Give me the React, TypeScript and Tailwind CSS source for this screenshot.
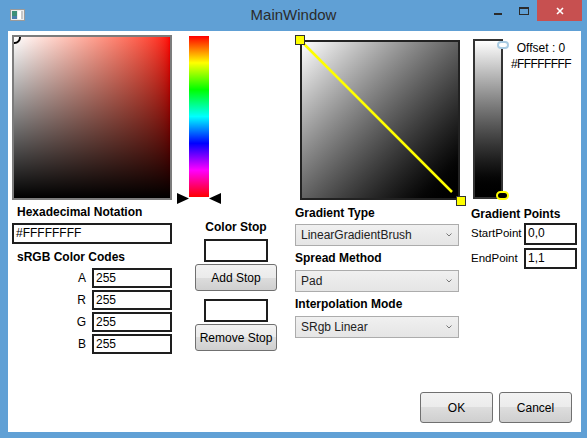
import React from "react";

const inputCls =
  "border-2 border-[#1e1e1e] bg-white px-[2px] text-[12px] leading-[16px] text-black";

const aeroBtn =
  "flex items-center justify-center rounded-[3px] border border-[#707070] bg-[linear-gradient(#f2f2f2_0%,#ebebeb_50%,#dddddd_50%,#cfcfcf_100%)] text-[12px] text-black";

function Combo({ value }: { value: string }) {
  return (
    <div className="flex h-[22px] w-[164px] items-center justify-between border border-[#acacac] bg-[linear-gradient(#f0f0f0,#e5e5e5)] pl-[5px] pr-[6px] text-[12px] text-[#222]">
      <span>{value}</span>
      <svg width="6" height="4" viewBox="0 0 6 4">
        <path d="M0.5 0.5 L3 3 L5.5 0.5" fill="none" stroke="#777" strokeWidth="1" />
      </svg>
    </div>
  );
}

function Label({ children, className = "" }: { children: React.ReactNode; className?: string }) {
  return <div className={`h-[16px] text-[12px] font-bold leading-[16px] text-black ${className}`}>{children}</div>;
}

function TitleBar() {
  return (
    <div className="grid h-[31px] grid-cols-[1fr_auto_1fr]">
      <div className="pl-[10px] pt-[9px]">
        {/* app icon */}
        <svg width="15" height="12" viewBox="0 0 15 12">
          <rect x="0.5" y="0.5" width="14" height="11" fill="#ececec" stroke="#9a9a9a" />
          <rect x="2" y="2" width="5" height="8" fill="#3d8f78" />
          <rect x="2" y="7" width="5" height="3" fill="#4a7fb0" />
          <rect x="8" y="2" width="3" height="8" fill="#ffffff" />
          <rect x="11" y="2" width="2" height="8" fill="#c8c8c8" />
        </svg>
      </div>
      <div className="pt-[5px] text-[15px] leading-[20px] text-[#2b2b2b]">MainWindow</div>
      <div className="flex items-start justify-end pr-[5px]">
        <div className="flex h-[21px] w-[26px] justify-center pt-[13px]">
          <div className="h-[2px] w-[8px] bg-[#2b2b2b]" />
        </div>
        <div className="flex h-[21px] w-[26px] justify-center pt-[7px]">
          <div className="h-[8px] w-[10px] border border-t-2 border-[#2b2b2b]" />
        </div>
        <div className="flex h-[21px] w-[45px] items-center justify-center bg-[#c75050]">
          <svg width="8" height="8" viewBox="0 0 8 8">
            <path d="M1 1 L7 7 M7 1 L1 7" stroke="#fff" strokeWidth="1.6" />
          </svg>
        </div>
      </div>
    </div>
  );
}

export default function App() {
  return (
    <div className="flex h-[438px] w-[587px] flex-col bg-[#60a0d5] font-['Liberation_Sans',Arial,sans-serif]">
      <TitleBar />

      <div className="mb-[6px] ml-[8px] mr-[6px] flex flex-1 flex-col bg-white">
        <div className="flex items-start">
          {/* Column 1: colour picker and codes */}
          <div className="ml-[4px] mt-[4px] flex w-[160px] flex-col">
            <div className="relative h-[165px] w-[160px] overflow-hidden border-2 border-[#7c7c7c] bg-linear-to-r from-white to-[#ff0000]">
              <div className="h-full w-full bg-linear-to-t from-black to-transparent" />
              <div className="absolute -left-[6px] -top-[6px] h-[13px] w-[13px] rounded-full border-2 border-black" />
            </div>
            <Label className="mt-[4px] pl-[5px]">Hexadecimal Notation</Label>
            <div className={`${inputCls} mt-[3px] h-[21px] w-[160px]`}>#FFFFFFFF</div>
            <Label className="mt-[5px] pl-[5px]">sRGB Color Codes</Label>
            <div className="mt-[3px] flex flex-col gap-[2px]">
              {["A", "R", "G", "B"].map((c) => (
                <div key={c} className="flex h-[20px] items-center">
                  <div className="w-[74px] text-right text-[12px] text-black">{c}</div>
                  <div className={`${inputCls} ml-[6px] h-[20px] w-[80px]`}>255</div>
                </div>
              ))}
            </div>
          </div>

          {/* Column 2: hue bar and colour stops */}
          <div className="flex w-[114px] flex-col">
            <div className="relative h-[172px]">
              <div className="ml-[17px] mt-[5px] h-[161px] w-[20px] bg-[linear-gradient(#ff0000,#ffff00,#00ff00,#00ffff,#0000ff,#ff00ff,#ff0000)]" />
              <svg className="absolute left-[5px] top-[162px]" width="12" height="11" viewBox="0 0 12 11">
                <polygon points="0,0 12,5.5 0,11" fill="#000" />
              </svg>
              <svg className="absolute left-[37px] top-[162px]" width="12" height="11" viewBox="0 0 12 11">
                <polygon points="12,0 0,5.5 12,11" fill="#000" />
              </svg>
            </div>
            <Label className="ml-[23px] mt-[16px] w-[82px] text-center">Color Stop</Label>
            <div className="ml-[32px] mt-[4px] h-[23px] w-[64px] border-2 border-[#1e1e1e] bg-white" />
            <div className={`${aeroBtn} ml-[23px] mt-[2px] h-[27px] w-[82px]`}>Add Stop</div>
            <div className="ml-[32px] mt-[8px] h-[23px] w-[64px] border-2 border-[#1e1e1e] bg-white" />
            <div className={`${aeroBtn} ml-[23px] mt-[2px] h-[27px] w-[82px]`}>Remove Stop</div>
          </div>

          {/* Column 3: gradient preview and options */}
          <div className="ml-[9px] flex w-[165px] flex-col">
            <div className="pt-[9px]">
              <div className="relative ml-[5px] h-[160px] w-[160px] border-2 border-[#222] bg-linear-to-br from-white to-black">
                <svg className="absolute left-0 top-0 overflow-visible" width="156" height="156">
                  <line x1="-2" y1="-2" x2="150" y2="150" stroke="#ffff00" strokeWidth="2.5" />
                </svg>
                <div className="absolute -left-[7px] -top-[7px] h-[10px] w-[10px] border border-[#333] bg-[#ffff00]" />
                <div className="absolute left-[154px] top-[154px] h-[10px] w-[10px] border border-[#333] bg-[#ffff00]" />
              </div>
            </div>
            <Label className="mt-[5px]">Gradient Type</Label>
            <div className="mt-[3px]">
              <Combo value="LinearGradientBrush" />
            </div>
            <Label className="mt-[4px]">Spread Method</Label>
            <div className="mt-[4px]">
              <Combo value="Pad" />
            </div>
            <Label className="mt-[4px]">Interpolation Mode</Label>
            <div className="mt-[4px]">
              <Combo value="SRgb Linear" />
            </div>
          </div>

          {/* Column 4: gradient stops and points */}
          <div className="ml-[11px] flex w-[110px] flex-col">
            <div className="flex pt-[8px]">
              <div className="relative ml-[2px] h-[160px] w-[30px] border-2 border-[#333] bg-linear-to-b from-white to-black">
                <div className="absolute left-[22px] top-[0px] h-[8px] w-[12px] rounded-full border-2 border-[#a9cbe2] bg-white" />
                <div className="absolute left-[21px] top-[150px] h-[9px] w-[13px] rounded-full border-2 border-[#ffff00] bg-black" />
              </div>
              <div className="w-[76px] pt-[1px] text-center text-[12px] leading-[16px] text-black">
                <div>Offset : 0</div>
                <div className="tracking-[-0.6px]">#FFFFFFFF</div>
              </div>
            </div>
            <Label className="mt-[7px]">Gradient Points</Label>
            <div className="mt-[1px] flex h-[22px] items-center">
              <div className="w-[53px] text-[11.5px] text-black">StartPoint</div>
              <div className={`${inputCls} h-[22px] w-[53px]`}>0,0</div>
            </div>
            <div className="mt-[3px] flex h-[21px] items-center">
              <div className="w-[53px] text-[11.5px] text-black">EndPoint</div>
              <div className={`${inputCls} h-[21px] w-[53px]`}>1,1</div>
            </div>
          </div>
        </div>

        <div className="mb-[9px] mr-[9px] mt-auto flex justify-end gap-[6px]">
          <div className={`${aeroBtn} h-[31px] w-[73px]`}>OK</div>
          <div className={`${aeroBtn} h-[31px] w-[73px]`}>Cancel</div>
        </div>
      </div>
    </div>
  );
}
